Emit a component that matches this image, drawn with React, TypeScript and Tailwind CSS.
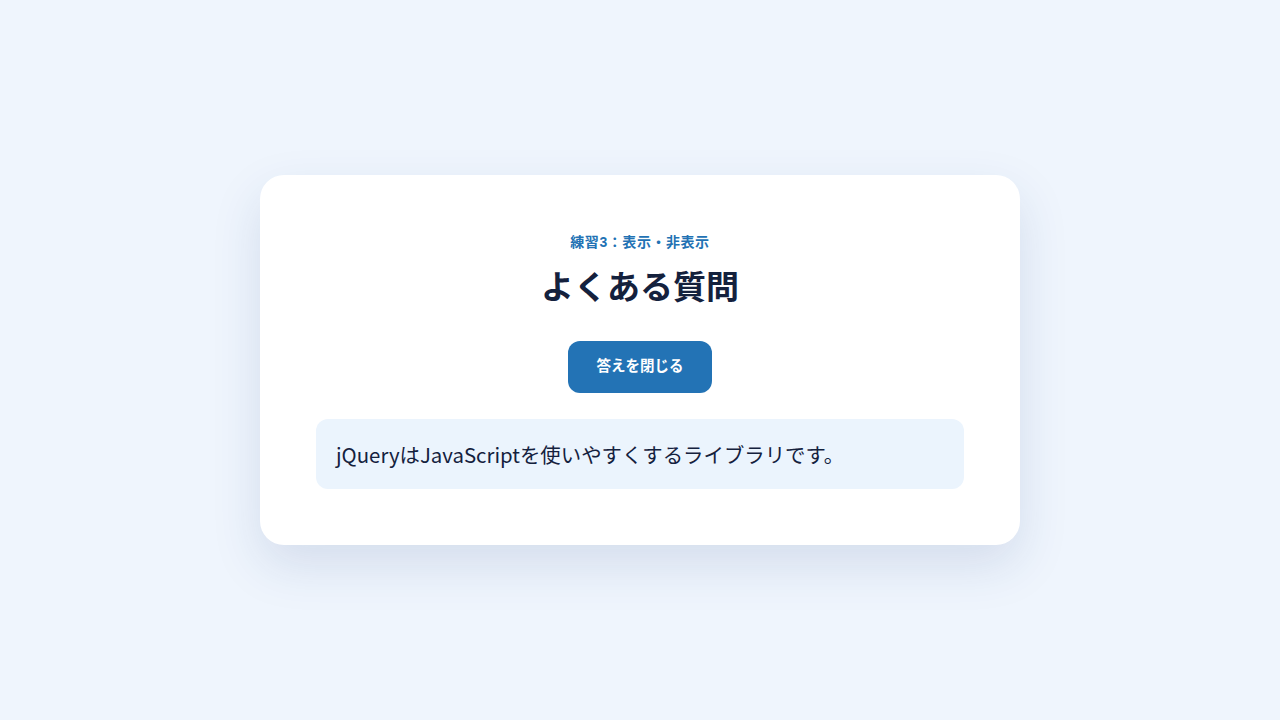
import React, { useState } from 'react';

export default function App() {
  const [open, setOpen] = useState(true);

  return (
    <div className="min-h-screen w-full bg-[#eff5fd] flex items-center justify-center font-['Liberation_Sans','Noto_Sans_CJK_JP',sans-serif]">
      <div className="w-[760px] rounded-[24px] bg-white px-14 pt-[57px] pb-14 shadow-[0_20px_50px_rgba(30,64,120,0.13)] flex flex-col items-center">
        <p className="text-[14px] font-bold leading-5 text-[#2272b4] tracking-[0.04em]">練習3：表示・非表示</p>
        <h1 className="mt-[15px] text-[33px] font-bold leading-[42px] text-[#14213d]">よくある質問</h1>
        <button
          onClick={() => setOpen(!open)}
          className="mt-[32px] h-[52px] w-[144px] rounded-[12px] bg-[#2373b5] text-[14.5px] font-bold text-white"
        >
          {open ? '答えを閉じる' : '答えを表示する'}
        </button>
        {open && (
          <div className="mt-[26px] w-full rounded-[12px] bg-[#ebf4fd] px-5 py-5 text-[20.4px] leading-[30px] text-[#14213d] font-['Noto_Sans_CJK_JP',sans-serif]">
            jQueryはJavaScriptを使いやすくするライブラリです。
          </div>
        )}
      </div>
    </div>
  );
}
